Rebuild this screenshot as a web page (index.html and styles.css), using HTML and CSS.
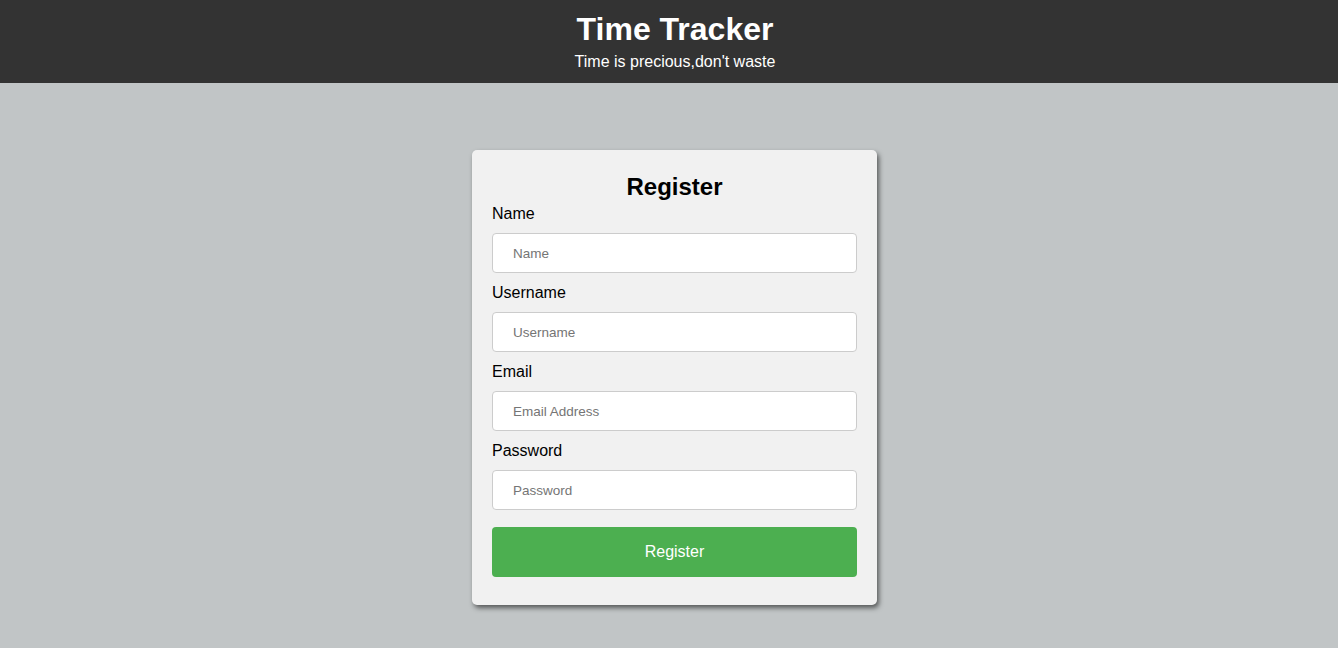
FILE: index.html
```html
<!DOCTYPE html>
<html>
<head>
<meta charset="utf-8">
<link rel="stylesheet" href="styles.css">
</head>
<body>
<header class="header">
  <h1 class="title">Time Tracker</h1>
  <p class="subtitle">Time is precious,don't waste</p>
</header>
<main class="main">
  <form class="card">
    <h2 class="card-title">Register</h2>
    <label class="label">Name</label>
    <input class="input" type="text" placeholder="Name">
    <label class="label">Username</label>
    <input class="input" type="text" placeholder="Username">
    <label class="label">Email</label>
    <input class="input" type="email" placeholder="Email Address">
    <label class="label">Password</label>
    <input class="input" type="password" placeholder="Password">
    <button class="btn" type="button">Register</button>
  </form>
</main>
</body>
</html>
```
FILE: styles.css
```css
html, body {
  margin: 0;
  padding: 0;
}
body {
  background: #c1c5c6;
  font-family: "Liberation Sans", Arial, sans-serif;
  min-height: 648px;
}
.header {
  background: #333333;
  color: #ffffff;
  text-align: center;
  height: 83px;
  box-sizing: border-box;
  padding: 11px 0 0 12px;
}
.title {
  margin: 0;
  font-size: 32px;
  line-height: 37px;
  font-weight: bold;
}
.subtitle {
  margin: 5px 0 0;
  font-size: 16px;
  line-height: 18px;
}
.main {
  display: flex;
  justify-content: center;
  padding: 67px 0 0 11px;
}
.card {
  width: 405px;
  box-sizing: border-box;
  background: #f1f1f1;
  border-radius: 5px;
  padding: 23px 20px 28px;
  box-shadow: 2px 3px 5px rgba(0, 0, 0, 0.55);
  display: flex;
  flex-direction: column;
}
.card-title {
  margin: 0;
  text-align: center;
  font-size: 24px;
  line-height: 28px;
  font-weight: bold;
  color: #000;
}
.label {
  display: block;
  font-size: 16px;
  line-height: 18px;
  color: #000;
  margin-top: 4px;
}
.input {
  display: block;
  margin: 10px 0 10px;
  height: 40px;
  box-sizing: border-box;
  border: 1px solid #cccccc;
  border-radius: 4px;
  background: #ffffff;
  padding: 0 20px;
  font-family: "Liberation Sans", Arial, sans-serif;
  font-size: 13.5px;
  color: #333;
  outline: none;
}
.input + .label {
  margin-top: 1px;
}
.input::placeholder {
  color: #757575;
}
.btn {
  margin-top: 7px;
  height: 50px;
  border: none;
  border-radius: 4px;
  background: #4caf50;
  color: #ffffff;
  font-family: "Liberation Sans", Arial, sans-serif;
  font-size: 16px;
  cursor: pointer;
}
```
